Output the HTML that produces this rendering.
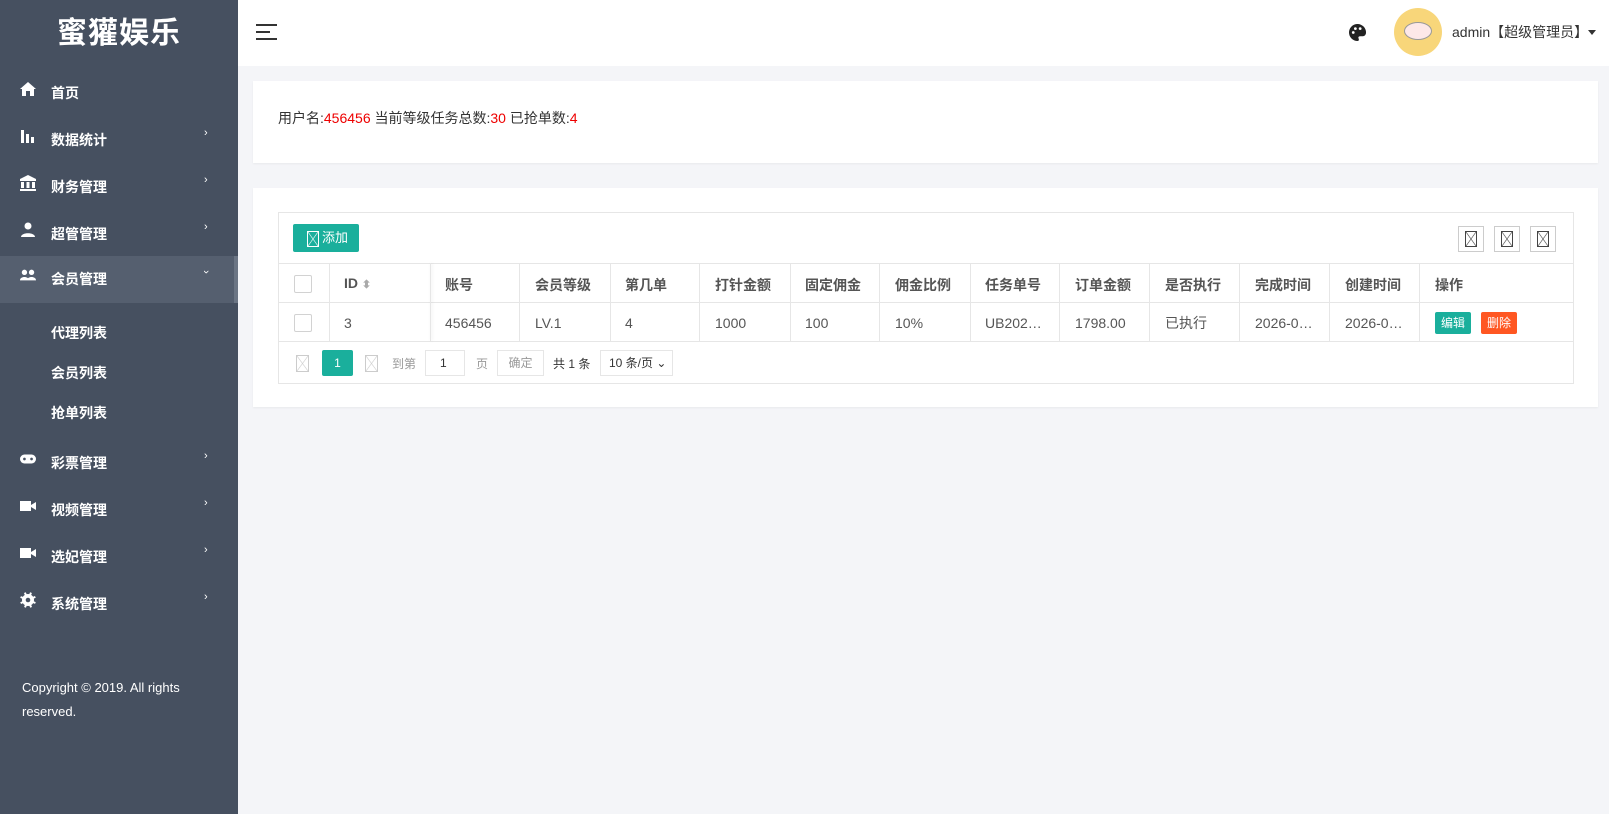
<!DOCTYPE html><html><head><meta charset="utf-8"><style>
*{margin:0;padding:0;box-sizing:border-box}
body{width:1609px;height:814px;background:#f4f5f8;font-family:"Liberation Sans","Noto Sans CJK SC",sans-serif;font-size:14px;color:#555;position:relative;overflow:hidden}
.abs{position:absolute}
#side{left:0;top:0;width:238px;height:814px;background:#465060}
.logo{left:0;width:238px;top:8px;text-align:center;color:#fff;font-size:30px;font-weight:bold;letter-spacing:1px}
.mi{left:0;width:238px;height:47px;color:#fff;font-weight:bold;font-size:14px}
.mi .t{position:absolute;left:51px;top:13px}
.mi .ic{position:absolute;left:20px;top:11px;width:16px;height:16px;fill:#fff}
.mi .ar{position:absolute;left:204px;top:10px;font-size:11px;font-weight:normal}
.sub{left:51px;color:#fff;font-weight:bold}
#hdr{left:238px;top:0;width:1371px;height:66px;background:#fff}
.card{background:#fff;box-shadow:0 1px 2px rgba(0,0,0,.05)}
.box{border:1px solid #e6e6e6}
.red{color:#e00}
.hl{left:278px;width:1296px;height:1px;background:#e6e6e6}
.vl{width:1px;background:#e6e6e6}
.th{font-weight:bold;color:#555}
.cb{width:18px;height:18px;border:1px solid #d2d2d2;border-radius:2px;background:#fff}
.x{position:absolute;background:linear-gradient(to top right,transparent calc(50% - .6px),currentColor 50%,transparent calc(50% + .6px)),linear-gradient(to top left,transparent calc(50% - .6px),currentColor 50%,transparent calc(50% + .6px));border:1px solid currentColor}
</style></head><body>
<div id="side" class="abs">
<div class="abs logo">蜜獾娱乐</div>
<div class="abs mi" style="top:70px"><svg class="ic" viewBox="0 0 16 16"><path d="M8 1L0 8h2v7h4v-5h4v5h4V8h2z"/></svg><span class="t">首页</span></div>
<div class="abs mi" style="top:117px"><svg class="ic" viewBox="0 0 16 16"><path d="M1 2h3v13H1zM6 6h3v9H6zM11 9h3v6h-3z"/></svg><span class="t">数据统计</span><span class="ar">›</span></div>
<div class="abs mi" style="top:164px"><svg class="ic" viewBox="0 0 16 16"><path d="M8 0L0 4v2h16V4zM1 7h3v6H1zM6.5 7h3v6h-3zM12 7h3v6h-3zM0 14h16v2H0z"/></svg><span class="t">财务管理</span><span class="ar">›</span></div>
<div class="abs mi" style="top:211px"><svg class="ic" viewBox="0 0 16 16"><circle cx="8" cy="4" r="3.5"/><path d="M1 15c0-5 14-5 14 0z"/></svg><span class="t">超管管理</span><span class="ar">›</span></div>
<div class="abs mi" style="top:256px;background:#555f6f;border-right:4px solid #6b7584"><svg class="ic" viewBox="0 0 18 16"><circle cx="5" cy="5" r="3"/><circle cx="13" cy="5" r="3"/><path d="M0 14c0-5 10-5 10 0zM8 14c0-5 10-5 10 0z"/></svg><span class="t">会员管理</span><span class="ar" style="transform:rotate(90deg)">›</span></div>
<div class="abs sub" style="top:323px">代理列表</div>
<div class="abs sub" style="top:363px">会员列表</div>
<div class="abs sub" style="top:403px">抢单列表</div>
<div class="abs mi" style="top:440px"><svg class="ic" viewBox="0 0 18 16"><rect x="0" y="3" width="18" height="10" rx="5"/><circle cx="5" cy="8" r="1.5" fill="#465060"/><circle cx="13" cy="8" r="1.5" fill="#465060"/></svg><span class="t">彩票管理</span><span class="ar">›</span></div>
<div class="abs mi" style="top:487px"><svg class="ic" viewBox="0 0 16 16"><path d="M0 3h11v10H0zM11 7l5-3v8l-5-3z"/></svg><span class="t">视频管理</span><span class="ar">›</span></div>
<div class="abs mi" style="top:534px"><svg class="ic" viewBox="0 0 16 16"><path d="M0 3h11v10H0zM11 7l5-3v8l-5-3z"/></svg><span class="t">选妃管理</span><span class="ar">›</span></div>
<div class="abs mi" style="top:581px"><svg class="ic" viewBox="0 0 16 16"><circle cx="8" cy="8" r="6"/><path d="M7 0h2v16H7zM0 7h16v2H0z" transform="rotate(22 8 8)"/><path d="M7 0h2v16H7zM0 7h16v2H0z" transform="rotate(67 8 8)"/><circle cx="8" cy="8" r="2.3" fill="#465060"/></svg><span class="t">系统管理</span><span class="ar">›</span></div>
<div class="abs" style="left:22px;top:676px;color:#fff;font-size:13px;line-height:24px">Copyright © 2019. All rights<br>reserved.</div>
</div>
<div id="hdr" class="abs">
<svg class="abs" style="left:18px;top:24px" width="21" height="16"><path d="M0 1h21M0 8h14M0 15h21" stroke="#333" stroke-width="2"/></svg>
<svg class="abs" style="left:1111px;top:24px" width="17" height="17" viewBox="0 0 16 16"><path d="M8 0a8 8 0 0 0 0 16c1.5 0 1.5-1.5 1-2.5-.5-1 0-2 1.5-2H13a3 3 0 0 0 3-3A8 8 0 0 0 8 0z" fill="#222"/><circle cx="4" cy="8" r="1.3" fill="#fff"/><circle cx="6" cy="4.3" r="1.3" fill="#fff"/><circle cx="10.5" cy="4.3" r="1.3" fill="#fff"/></svg>
<div class="abs" style="left:1156px;top:8px;width:48px;height:48px;border-radius:50%;background:#f8d67a"></div>
<div class="abs" style="left:1166px;top:22px;width:28px;height:18px;border-radius:50%;background:#fde8e8;border:1px solid #999"></div>
<div class="abs" style="left:1214px;top:22px;color:#333;font-size:14px">admin【超级管理员】</div>
<div class="abs" style="left:1350px;top:30px;border:4px solid transparent;border-top:5px solid #333"></div>
</div>
<div class="abs card" style="left:253px;top:81px;width:1345px;height:82px">
<div class="abs" style="left:25px;top:27px;color:#333">用户名:<span class="red">456456</span> 当前等级任务总数:<span class="red">30</span> 已抢单数:<span class="red">4</span></div>
</div>
<div class="abs card" style="left:253px;top:188px;width:1345px;height:219px"></div>
<div class="abs box" style="left:278px;top:212px;width:1296px;height:172px;background:#fff"></div>
<div class="abs" style="left:293px;top:224px;width:66px;height:28px;background:#1aaf9c;border-radius:2px;color:#fff;font-size:13px;line-height:28px;padding-left:29px">添加</div>
<div class="x" style="left:307px;top:231px;width:12px;height:16px;color:#fff"></div>
<div class="abs box" style="left:1458px;top:226px;width:26px;height:26px;border-color:#ccc"></div>
<div class="abs box" style="left:1494px;top:226px;width:26px;height:26px;border-color:#ccc"></div>
<div class="abs box" style="left:1530px;top:226px;width:26px;height:26px;border-color:#ccc"></div>
<div class="x" style="left:1465px;top:231px;width:12px;height:16px;color:#444"></div>
<div class="x" style="left:1501px;top:231px;width:12px;height:16px;color:#444"></div>
<div class="x" style="left:1537px;top:231px;width:12px;height:16px;color:#444"></div>
<div class="abs hl" style="top:263px"></div>
<div class="abs hl" style="top:302px"></div>
<div class="abs hl" style="top:341px"></div>
<div class="abs vl" style="left:329px;top:263px;height:78px"></div>
<div class="abs vl" style="left:430px;top:263px;height:78px;box-shadow:1px 0 3px rgba(0,0,0,.1)"></div>
<div class="abs vl" style="left:519px;top:263px;height:78px"></div>
<div class="abs vl" style="left:610px;top:263px;height:78px"></div>
<div class="abs vl" style="left:699px;top:263px;height:78px"></div>
<div class="abs vl" style="left:790px;top:263px;height:78px"></div>
<div class="abs vl" style="left:879px;top:263px;height:78px"></div>
<div class="abs vl" style="left:970px;top:263px;height:78px"></div>
<div class="abs vl" style="left:1059px;top:263px;height:78px"></div>
<div class="abs vl" style="left:1149px;top:263px;height:78px"></div>
<div class="abs vl" style="left:1239px;top:263px;height:78px"></div>
<div class="abs vl" style="left:1329px;top:263px;height:78px"></div>
<div class="abs vl" style="left:1419px;top:263px;height:78px"></div>
<div class="abs cb" style="left:294px;top:275px"></div>
<div class="abs cb" style="left:294px;top:314px"></div>
<div class="abs th" style="left:344px;top:275px">ID <span style="color:#aaa;font-size:11px">⬍</span></div>
<div class="abs th" style="left:445px;top:275px">账号</div>
<div class="abs th" style="left:535px;top:275px">会员等级</div>
<div class="abs th" style="left:625px;top:275px">第几单</div>
<div class="abs th" style="left:715px;top:275px">打针金额</div>
<div class="abs th" style="left:805px;top:275px">固定佣金</div>
<div class="abs th" style="left:895px;top:275px">佣金比例</div>
<div class="abs th" style="left:985px;top:275px">任务单号</div>
<div class="abs th" style="left:1075px;top:275px">订单金额</div>
<div class="abs th" style="left:1165px;top:275px">是否执行</div>
<div class="abs th" style="left:1255px;top:275px">完成时间</div>
<div class="abs th" style="left:1345px;top:275px">创建时间</div>
<div class="abs th" style="left:1435px;top:275px">操作</div>
<div class="abs" style="left:344px;top:315px">3</div>
<div class="abs" style="left:445px;top:315px">456456</div>
<div class="abs" style="left:535px;top:315px">LV.1</div>
<div class="abs" style="left:625px;top:315px">4</div>
<div class="abs" style="left:715px;top:315px">1000</div>
<div class="abs" style="left:805px;top:315px">100</div>
<div class="abs" style="left:895px;top:315px">10%</div>
<div class="abs" style="left:985px;top:315px">UB202…</div>
<div class="abs" style="left:1075px;top:315px">1798.00</div>
<div class="abs" style="left:1165px;top:313px">已执行</div>
<div class="abs" style="left:1255px;top:315px">2026-0…</div>
<div class="abs" style="left:1345px;top:315px">2026-0…</div>
<div class="abs" style="left:1435px;top:312px;width:36px;height:22px;background:#1aaf9c;color:#fff;font-size:12px;line-height:22px;text-align:center;border-radius:2px">编辑</div>
<div class="abs" style="left:1481px;top:312px;width:36px;height:22px;background:#ff5722;color:#fff;font-size:12px;line-height:22px;text-align:center;border-radius:2px">删除</div>
<div class="x" style="left:296px;top:355px;width:13px;height:17px;color:#ccc"></div>
<div class="abs" style="left:322px;top:350px;width:31px;height:26px;background:#1aaf9c;color:#fff;font-size:12px;line-height:26px;text-align:center;border-radius:2px">1</div>
<div class="x" style="left:365px;top:355px;width:13px;height:17px;color:#ccc"></div>
<div class="abs" style="left:392px;top:355px;font-size:12px;color:#999">到第</div>
<div class="abs box" style="left:425px;top:350px;width:40px;height:26px;font-size:12px;line-height:24px;padding-left:14px;color:#333">1</div>
<div class="abs" style="left:476px;top:355px;font-size:12px;color:#999">页</div>
<div class="abs box" style="left:497px;top:350px;width:47px;height:26px;font-size:12px;line-height:24px;text-align:center;color:#999">确定</div>
<div class="abs" style="left:553px;top:355px;font-size:12px;color:#333">共 1 条</div>
<div class="abs box" style="left:600px;top:350px;width:73px;height:26px;font-size:12px;line-height:24px;padding-left:8px;color:#333">10 条/页 ⌄</div>
</body></html>
